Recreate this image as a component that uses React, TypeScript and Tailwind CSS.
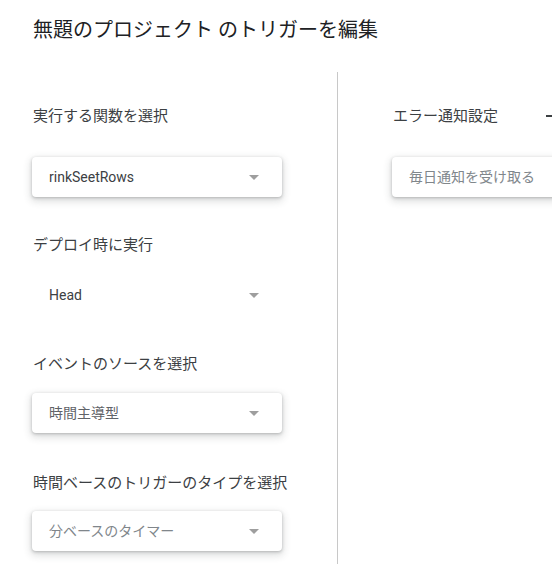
import React from 'react'

const font = { fontFamily: 'Roboto, "Noto Sans CJK JP", sans-serif' }

function Arrow() {
  return (
    <svg width="10" height="5" viewBox="0 0 10 5" className="shrink-0">
      <path d="M0 0 L10 0 L5 5 Z" fill="#9e9e9e" />
    </svg>
  )
}

interface SelectProps {
  value: string
  tone?: 'dark' | 'mid' | 'light'
  flat?: boolean
  arrow?: boolean
  className?: string
}

function Select({ value, tone = 'dark', flat = false, arrow = true, className = '' }: SelectProps) {
  const color =
    tone === 'dark' ? 'text-[#3c4043]' : tone === 'mid' ? 'text-[#5f6368]' : 'text-[#80868b]'
  return (
    <div
      className={`flex h-10 w-[250px] items-center justify-between rounded pl-[17px] pr-[23px] ${
        flat ? '' : 'bg-white shadow-[0_1px_3px_0_rgba(60,64,67,0.3),0_3px_7px_2px_rgba(60,64,67,0.15)]'
      } ${className}`}
    >
      <span className={`text-[14px] leading-5 ${color}`}>{value}</span>
      {arrow && <Arrow />}
    </div>
  )
}

function Label({ children, className = '' }: { children: React.ReactNode; className?: string }) {
  return (
    <p className={`whitespace-nowrap pl-px text-[15px] leading-5 text-[#3c4043] ${className}`}>{children}</p>
  )
}

export default function App() {
  return (
    <div className="relative h-[564px] w-[552px] overflow-hidden bg-white" style={font}>
      <h1 className="pl-[33px] pt-[19px] text-[20px] leading-[22px] font-normal text-[#202124]">
        無題のプロジェクト のトリガーを編集
      </h1>

      <div className="mt-[31px] flex h-[492px]">
        {/* 左カラム */}
        <div className="w-[337px] shrink-0 pl-[32px] pt-[34px]">
          <Label>実行する関数を選択</Label>
          <Select value="rinkSeetRows" className="mt-[31px]" />

          <Label className="mt-[38px]">デプロイ時に実行</Label>
          <Select value="Head" flat className="mt-[20px]" />

          <Label className="mt-[39px]">イベントのソースを選択</Label>
          <Select value="時間主導型" tone="mid" className="mt-[19px]" />

          <Label className="mt-[40px]">時間ベースのトリガーのタイプを選択</Label>
          <Select value="分ベースのタイマー" tone="light" className="mt-[18px]" />
        </div>

        <div className="w-px shrink-0 bg-[#c8c8c8]" />

        {/* 右カラム */}
        <div className="shrink-0 pl-[54px] pt-[34px]">
          <div className="flex items-center">
            <Label>エラー通知設定</Label>
            <div className="ml-[48px] h-[1.5px] w-[10px] bg-[#3c4043]" />
          </div>
          <Select value="毎日通知を受け取る" tone="light" arrow={false} className="mt-[31px]" />
        </div>
      </div>
    </div>
  )
}
